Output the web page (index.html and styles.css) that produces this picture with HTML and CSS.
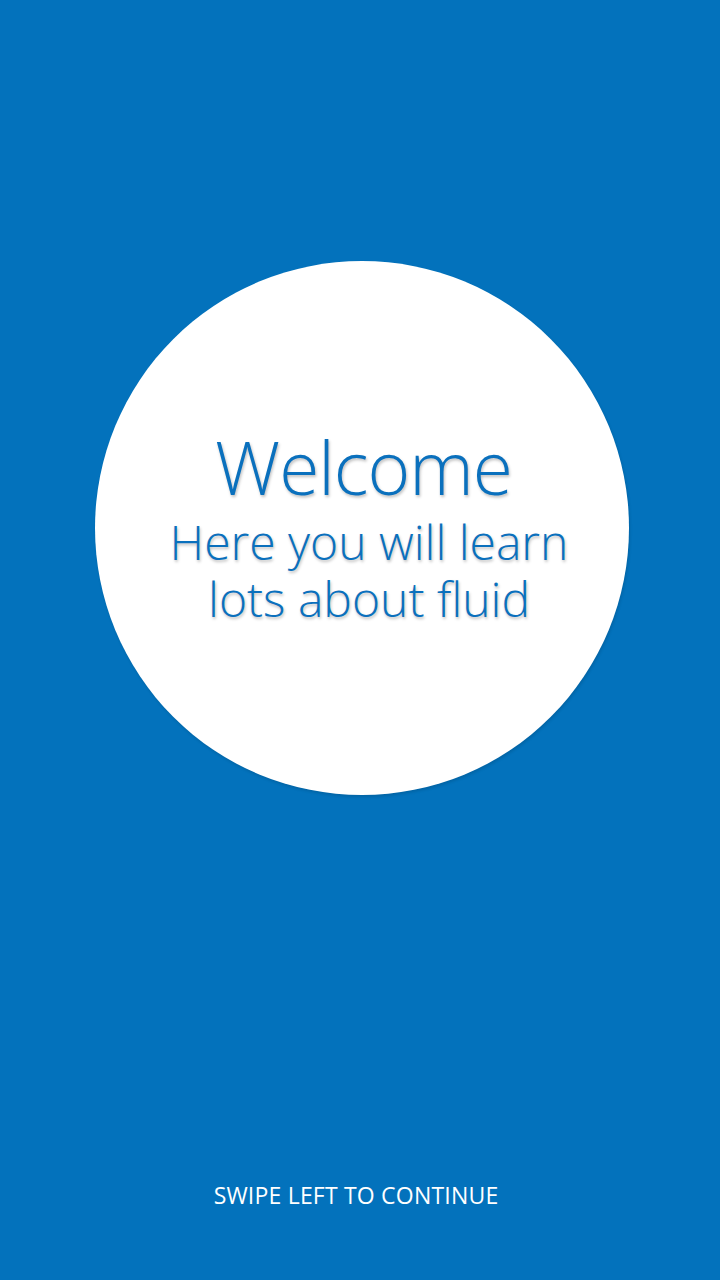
FILE: index.html
```html
<!DOCTYPE html>
<html>
<head>
<meta charset="utf-8">
<link rel="stylesheet" href="styles.css">
</head>
<body>
<main class="screen">
  <section class="circle">
    <h1 class="title">Welcome</h1>
    <p class="subtitle">Here you will learn<br>lots about fluid</p>
  </section>
  <footer class="hint">SWIPE LEFT TO CONTINUE</footer>
</main>
</body>
</html>
```
FILE: styles.css
```css
html, body {
  margin: 0;
  padding: 0;
}
body {
  width: 720px;
  height: 1280px;
  background: #0372bc;
  font-family: "Open Sans", "Noto Sans", sans-serif;
  overflow: hidden;
}
.screen {
  display: flex;
  flex-direction: column;
  height: 1280px;
}
.circle {
  width: 534px;
  height: 534px;
  margin: 261px 0 0 95px;
  border-radius: 50%;
  background: #ffffff;
  box-shadow: 1px 2px 3px rgba(0, 0, 0, 0.12);
  display: flex;
  flex-direction: column;
  align-items: center;
  box-sizing: border-box;
  padding-top: 166px;
  color: #0a70bd;
}
.title {
  margin: 0;
  padding-left: 3px;
  font-weight: 300;
  font-size: 73px;
  line-height: 80px;
  letter-spacing: -1px;
  text-shadow: 1px 2px 3px rgba(0, 0, 0, 0.25);
}
.subtitle {
  margin: 6px 0 0;
  padding-left: 14px;
  font-weight: 300;
  font-size: 48px;
  line-height: 57px;
  text-align: center;
  text-shadow: 1px 2px 3px rgba(0, 0, 0, 0.25);
}
.hint {
  margin-top: auto;
  margin-bottom: 70px;
  margin-right: 8px;
  text-align: center;
  color: #ffffff;
  font-size: 23px;
  font-weight: 400;
  line-height: 30px;
  letter-spacing: 0.2px;
}
```
